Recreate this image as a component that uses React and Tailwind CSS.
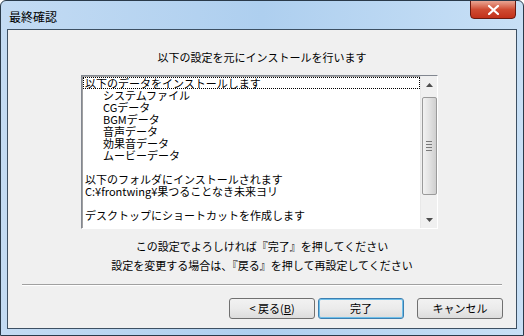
import React from 'react';

const font = { fontFamily: '"Noto Sans CJK JP", "Liberation Sans", sans-serif' };

const lines = [
  { t: '以下のデータをインストールします', focus: true },
  { t: 'システムファイル', indent: true },
  { t: 'CGデータ', indent: true },
  { t: 'BGMデータ', indent: true },
  { t: '音声データ', indent: true },
  { t: '効果音データ', indent: true },
  { t: 'ムービーデータ', indent: true },
  { t: '' },
  { t: '以下のフォルダにインストールされます' },
  { t: 'C:¥frontwing¥果つることなき未来ヨリ' },
  { t: '' },
  { t: 'デスクトップにショートカットを作成します' },
];

const Button = ({ children, primary }) => (
  <div
    className={`w-[86px] h-[21px] flex items-center justify-center text-[11px] text-black rounded-[3px] bg-gradient-to-b from-[#f2f2f2] via-[#ebebeb] to-[#dcdcdc] ${
      primary ? 'border border-[#3c7fb1] shadow-[inset_0_0_0_1px_#6fc0ea]' : 'border border-[#707070]'
    }`}
  >
    {children}
  </div>
);

const Scrollbar = () => (
  <div className="w-[17px] h-full bg-[#f0f0f0] flex flex-col items-center border-l border-[#e8e8e8]">
    <div className="h-[17px] w-full flex items-center justify-center">
      <svg width="7" height="4" viewBox="0 0 7 4"><path d="M0 4 L3.5 0 L7 4 Z" fill="#4d4d4d" /></svg>
    </div>
    <div className="mt-[4px] w-[15px] h-[98px] rounded-[2px] border border-[#9a9a9a] bg-gradient-to-r from-[#f2f2f2] via-[#e2e2e2] to-[#cfcfcf] flex flex-col items-center justify-center gap-[2px]">
      <div className="w-[6px] h-px bg-[#7a7a7a]" />
      <div className="w-[6px] h-px bg-[#7a7a7a]" />
      <div className="w-[6px] h-px bg-[#7a7a7a]" />
      <div className="w-[6px] h-px bg-[#7a7a7a]" />
    </div>
    <div className="flex-1" />
    <div className="h-[17px] w-full flex items-center justify-center">
      <svg width="7" height="4" viewBox="0 0 7 4"><path d="M0 0 L7 0 L3.5 4 Z" fill="#4d4d4d" /></svg>
    </div>
  </div>
);

export default function App() {
  return (
    <div
      style={font}
      className="w-[524px] h-[336px] overflow-hidden rounded-t-[6px] border border-[#2a3a4a] bg-gradient-to-r from-[#c3dbf3] via-[#aecfef] to-[#c8e0f6] flex flex-col px-[6px] pb-[6px]"
    >
      <div className="h-[28px] flex items-start relative shrink-0">
        <span className="mt-[7px] ml-[2px] text-[12px] text-black">最終確認</span>
        <div className="absolute right-[1px] top-[-1px] w-[46px] h-[19px] rounded-b-[4px] border border-[#6a1a10] bg-gradient-to-b from-[#e8a593] via-[#cf4b32] to-[#c2301a] flex items-center justify-center">
          <svg width="11" height="10" viewBox="0 0 11 10">
            <path d="M1 1 L10 9 M10 1 L1 9" stroke="#ffffff" strokeWidth="2.2" strokeLinecap="square" />
          </svg>
        </div>
      </div>
      <div className="flex-1 border border-[#3d5063] bg-[#f0f0f0] flex flex-col items-center">
        <div className="mt-[20px] text-[11px] leading-[15px] text-black">以下の設定を元にインストールを行います</div>
        <div className="mt-[10px] self-start ml-[73px] w-[357px] h-[154px] border border-[#828790] border-r-[#ffffff] border-b-[#ffffff] shadow-[inset_1px_1px_0_#a0a0a0] bg-white flex">
          <div className="flex-1 pt-[1px] pl-[1px] flex flex-col text-[11px] leading-[12px] text-black">
            {lines.map((l, i) => (
              <div
                key={i}
                className={`h-[12px] whitespace-nowrap ${l.indent ? 'pl-[20px]' : 'pl-[2px]'} ${
                  l.focus ? 'outline-1 outline-dotted outline-black -outline-offset-1' : ''
                }`}
              >
                {l.t}
              </div>
            ))}
          </div>
          <Scrollbar />
        </div>
        <div className="mt-[10px] text-[11px] leading-[15px] text-black">この設定でよろしければ『完了』を押してください</div>
        <div className="mt-[4px] text-[11px] leading-[15px] text-black">設定を変更する場合は、『戻る』を押して再設定してください</div>
        <div className="mt-[11px] w-[480px] h-[2px] border-t border-[#a0a0a0] border-b border-b-white" />
        <div className="mt-[12px] self-end mr-[13px] flex gap-[3px]">
          <Button>&lt; 戻る(<span className="underline">B</span>)</Button>
          <Button primary>完了</Button>
          <div className="w-[7px]" />
          <Button>キャンセル</Button>
        </div>
      </div>
    </div>
  );
}
